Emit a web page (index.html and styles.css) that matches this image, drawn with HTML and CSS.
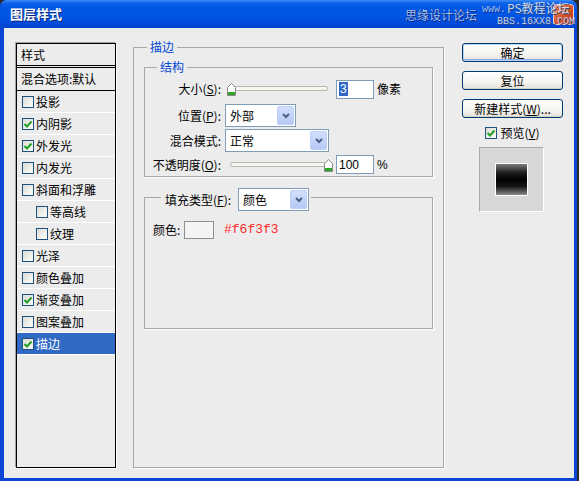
FILE: index.html
```html
<!DOCTYPE html>
<html lang="zh-CN">
<head>
<meta charset="utf-8">
<title>图层样式</title>
<link rel="stylesheet" href="styles.css">
</head>
<body>
<div class="window">
  <div class="titlebar">
    <span class="title">图层样式</span>
    <span class="wm wm1">思缘设计论坛</span>
    <span class="wm wm2">www.</span>
    <span class="closebtn"></span>
    <span class="wm wm3">PS教程论坛</span>
    <span class="wm wm4">BBS.16XX8.COM</span>
  </div>
  <div class="client">
    <div class="stylelist">
      <div class="lhead">样式</div>
      <div class="lblend">混合选项:默认</div>
      <ul class="items">
        <li class="item"><span class="cb"></span>投影</li>
        <li class="item"><span class="cb on"><svg viewBox="0 0 10 10"><path d="M1.5 5 L4 7.5 L8.5 2.5"/></svg></span>内阴影</li>
        <li class="item"><span class="cb on"><svg viewBox="0 0 10 10"><path d="M1.5 5 L4 7.5 L8.5 2.5"/></svg></span>外发光</li>
        <li class="item"><span class="cb"></span>内发光</li>
        <li class="item"><span class="cb"></span>斜面和浮雕</li>
        <li class="item sub"><span class="cb"></span>等高线</li>
        <li class="item sub"><span class="cb"></span>纹理</li>
        <li class="item"><span class="cb"></span>光泽</li>
        <li class="item"><span class="cb"></span>颜色叠加</li>
        <li class="item"><span class="cb on"><svg viewBox="0 0 10 10"><path d="M1.5 5 L4 7.5 L8.5 2.5"/></svg></span>渐变叠加</li>
        <li class="item"><span class="cb"></span>图案叠加</li>
        <li class="item sel"><span class="cb on"><svg viewBox="0 0 10 10"><path d="M1.5 5 L4 7.5 L8.5 2.5"/></svg></span>描边</li>
      </ul>
    </div>

    <fieldset class="group main">
      <legend>描边</legend>
      <div class="main-body">
        <fieldset class="group struct">
          <legend>结构</legend>
          <div class="struct-body">
            <div class="row r1">
              <span class="lbl">大小(<u>S</u>):</span>
              <span class="slider">
                <span class="track"></span>
                <svg class="thumb t-left" viewBox="0 0 9 13"><path d="M0.5 4.5 L4.5 0.5 L8.5 4.5 L8.5 12.5 L0.5 12.5 Z" fill="#fff" stroke="#8a8a80"/><rect x="1" y="9" width="7" height="3" fill="#2aa52a"/></svg>
              </span>
              <span class="num"><span class="selected">3</span></span>
              <span class="unit">像素</span>
            </div>
            <div class="row r2">
              <span class="lbl">位置(<u>P</u>):</span>
              <span class="select w71"><span class="val">外部</span><span class="arrow"><svg viewBox="0 0 8 6"><path d="M1 1 L4 4 L7 1"/></svg></span></span>
            </div>
            <div class="row r3">
              <span class="lbl">混合模式:</span>
              <span class="select w104"><span class="val">正常</span><span class="arrow"><svg viewBox="0 0 8 6"><path d="M1 1 L4 4 L7 1"/></svg></span></span>
            </div>
            <div class="row r4">
              <span class="lbl">不透明度(<u>O</u>):</span>
              <span class="slider">
                <span class="track t2"></span>
                <svg class="thumb t-right" viewBox="0 0 9 13"><path d="M0.5 4.5 L4.5 0.5 L8.5 4.5 L8.5 12.5 L0.5 12.5 Z" fill="#fff" stroke="#8a8a80"/><rect x="1" y="9" width="7" height="3" fill="#2aa52a"/></svg>
              </span>
              <span class="num"><span>100</span></span>
              <span class="unit pct">%</span>
            </div>
          </div>
        </fieldset>

        <fieldset class="group fill">
          <legend>
            <span class="flbl">填充类型(<u>F</u>):</span>
            <span class="select w71 fsel"><span class="val">颜色</span><span class="arrow"><svg viewBox="0 0 8 6"><path d="M1 1 L4 4 L7 1"/></svg></span></span>
          </legend>
          <div class="fill-body">
            <div class="colorrow">
              <span class="clbl">颜色:</span>
              <span class="swatch"></span>
              <span class="hex">#f6f3f3</span>
            </div>
          </div>
        </fieldset>
      </div>
    </fieldset>

    <div class="side">
      <div class="btn default">确定</div>
      <div class="btn">复位</div>
      <div class="btn">新建样式(<u>W</u>)...</div>
      <div class="preview-check"><span class="cb on"><svg viewBox="0 0 10 10"><path d="M1.5 5 L4 7.5 L8.5 2.5"/></svg></span>预览(<u>V</u>)</div>
      <div class="preview"><div class="swatchbox"></div></div>
    </div>
  </div>
</div>
</body>
</html>
```

FILE: styles.css
```css
* { box-sizing: border-box; }
html, body { margin: 0; padding: 0; }
body {
  width: 579px;
  height: 481px;
  overflow: hidden;
  background: #2a2a2a;
  font-family: "Noto Sans CJK SC", "Noto Sans", sans-serif;
  font-size: 12px;
  line-height: 16px;
  color: #000;
}
u { text-decoration: underline; text-underline-offset: 1px; }

.window {
  width: 577px;
  height: 481px;
  display: flex;
  flex-direction: column;
  background: #0a47d6;
  border-radius: 7px 7px 0 0;
  overflow: hidden;
}

/* title bar */
.titlebar {
  position: relative;
  height: 28px;
  flex: none;
  display: flex;
  align-items: center;
  padding-left: 10px;
  background: linear-gradient(#3d8df7 0, #0d62ea 3px, #0057e6 8px, #0054e2 17px, #004ad9 24px, #0042cc 28px);
}
.title {
  color: #fff;
  font-weight: bold;
  font-size: 13px;
  text-shadow: 1px 1px 0 #0b2676;
}
.wm {
  position: absolute;
  white-space: nowrap;
}
.wm1 {
  left: 405px; top: 7px;
  font-size: 12px;
  color: rgba(185, 212, 255, 0.9);
  text-shadow: 0 0 1px #08247a, 1px 1px 0 #0a2d8c;
}
.wm2 {
  left: 482px; top: 4px;
  font-size: 10px;
  line-height: 12px;
  font-family: "Liberation Mono", monospace;
  color: rgba(185, 212, 255, 0.85);
  text-shadow: 1px 1px 0 #0a2d8c;
}
.closebtn {
  position: absolute;
  left: 553px; top: 4px;
  width: 21px; height: 21px;
  border-radius: 3px;
  border: 1px solid #f0d0c4;
  background: linear-gradient(135deg, #e98a66, #d24a22 60%, #b8380f);
}
.wm3 {
  left: 507px; top: 0px;
  font-size: 12px;
  line-height: 16px;
  color: rgba(222, 230, 244, 0.9);
  text-shadow: 1px 1px 0 #3a4a7a;
}
.wm4 {
  left: 497px; top: 16px;
  font-size: 10px;
  line-height: 12px;
  font-family: "Liberation Mono", monospace;
  color: rgba(215, 222, 238, 0.9);
  text-shadow: 1px 1px 0 #3a4a7a;
}

/* client area */
.client {
  flex: 1;
  margin: 0 3px 3px 4px;
  background: #ececec;
  display: flex;
  align-items: flex-start;
  padding: 11px 0 0 12px;
}

/* style list */
.stylelist {
  flex: none;
  width: 100px;
  height: 425px;
  margin-top: 4px;
  border: 1px solid #000;
  box-shadow: -1px -1px 0 #a3a3a3, 1px 1px 0 #fff;
  background: #ececec;
}
.lhead {
  height: 22px;
  padding-left: 4px;
  display: flex;
  align-items: center;
  border-bottom: 1px solid #000;
}
.lblend {
  margin-top: 1px;
  height: 24px;
  padding-left: 4px;
  display: flex;
  align-items: center;
  border-top: 1px solid #000;
  border-bottom: 1px solid #000;
}
.items { list-style: none; margin: 0; padding: 0; }
.item {
  height: 22px;
  display: flex;
  align-items: center;
  border-bottom: 1px solid #fff;
  padding-left: 5px;
}
.item.sub { padding-left: 19px; }
.item.sel { background: #316ac5; color: #fff; }

.cb {
  flex: none;
  width: 12px;
  height: 12px;
  margin-right: 2px;
  border: 1px solid #1c5180;
  background: linear-gradient(135deg, #dcdcd5, #fdfdfb);
  display: flex;
  align-items: center;
  justify-content: center;
}
.cb svg { width: 10px; height: 10px; display: block; }
.cb svg path { fill: none; stroke: #21a121; stroke-width: 2; }

/* group boxes */
.group {
  margin: 0;
  padding: 0;
  min-width: 0;
  border: 1px solid #a8a89e;
  box-shadow: 1px 1px 0 #fff;
}
.group > legend {
  padding: 0 3px;
  line-height: 16px;
  font-size: 12px;
}
.main {
  flex: none;
  width: 311px;
  height: 429px;
  margin-left: 17px;
}
.main > legend { margin-left: 13px; color: #0046d5; }
.main-body { padding: 4px 10px 0 10px; }

.struct > legend { margin-left: 12px; color: #0046d5; }
.struct-body { padding: 3px 0 2px 0; }

.row { display: flex; align-items: center; }
.r1 { height: 22px; }
.r2 { height: 23px; margin-top: 4px; }
.r3 { height: 23px; margin-top: 2px; }
.r4 { height: 19px; margin-top: 3px; }
.lbl {
  width: 76px;
  margin-right: 4px;
  text-align: right;
  white-space: nowrap;
}

.slider {
  position: relative;
  flex: none;
  width: 107px;
  height: 22px;
  margin-right: 4px;
}
.track {
  position: absolute;
  left: 5px;
  right: 4px;
  top: 8px;
  height: 5px;
  border: 1px solid #b9b9ad;
  border-radius: 2px;
  background: #f6f6f2;
}
.track.t2 { right: 6px; }
.thumb {
  position: absolute;
  top: 5px;
  width: 9px;
  height: 13px;
}
.t-left { left: 2px; }
.t-right { left: 99px; }

.num {
  flex: none;
  width: 38px;
  height: 19px;
  border: 1px solid #7f9db9;
  background: #fff;
  padding-left: 2px;
  display: flex;
  align-items: center;
  font-family: "Liberation Sans", Arial, sans-serif;
  font-size: 12px;
}
.num .selected {
  background: #316ac5;
  color: #fff;
  padding: 0 1px;
  line-height: 14px;
}
.unit { margin-left: 3px; }
.pct { font-family: "Liberation Sans", Arial, sans-serif; margin-left: 3px; }

.select {
  flex: none;
  height: 23px;
  border: 1px solid #7f9db9;
  background: #fff;
  display: flex;
  align-items: center;
  padding: 1px 1px 1px 4px;
}
.select .val { flex: 1; }
.w71 { width: 71px; }
.w104 { width: 104px; }
.arrow {
  flex: none;
  width: 17px;
  height: 19px;
  border: 1px solid #bccff7;
  border-radius: 2px;
  background: linear-gradient(#d2defc, #b6c9f6);
  display: flex;
  align-items: center;
  justify-content: center;
}
.arrow svg { width: 8px; height: 6px; display: block; }
.arrow svg path { fill: none; stroke: #4d6185; stroke-width: 2; }

/* fill group */
.fill { margin-top: 11px; }
.fill > legend {
  margin-left: 16px;
  padding: 0 2px 0 4px;
  display: flex;
  align-items: flex-start;
  height: 19px;
}
.flbl {
  width: 73px;
  height: 19px;
  line-height: 23px;
  white-space: nowrap;
}
.fsel { margin-bottom: -4px; }
.fill-body { padding: 14px 0 89px 8px; }
.colorrow { display: flex; align-items: center; height: 18px; }
.clbl { width: 31px; }
.swatch {
  width: 30px;
  height: 18px;
  border: 1px solid #8f8f8f;
  background: #f6f3f3;
}
.hex {
  margin-left: 10px;
  font-family: "Liberation Mono", monospace;
  font-size: 13px;
  color: #ff2a2a;
}

/* right column */
.side {
  flex: none;
  width: 101px;
  margin-left: 18px;
  margin-top: 4px;
  display: flex;
  flex-direction: column;
}
.btn {
  height: 19px;
  margin-bottom: 9px;
  border: 1px solid #003c74;
  border-radius: 3px;
  background: linear-gradient(#ffffff, #f4f4f0 60%, #e3e1d8);
  display: flex;
  align-items: center;
  justify-content: center;
  white-space: nowrap;
  box-shadow: inset 0 -1px 0 #d6d0c5;
}
.btn.default {
  box-shadow: inset 0 0 0 1px #bcd2f5, inset 0 -2px 0 #8caaf0;
}
.preview-check {
  height: 13px;
  margin-top: -1px;
  display: flex;
  align-items: center;
  justify-content: center;
}
.preview-check .cb { margin-right: 3px; }
.preview {
  width: 65px;
  height: 65px;
  margin: 8px auto 0 17px;
  background: #d7d7d7;
  border-top: 1px solid #a9a9a9;
  border-left: 1px solid #a9a9a9;
  border-right: 1px solid #fff;
  border-bottom: 1px solid #fff;
  display: flex;
  align-items: center;
  justify-content: center;
}
.swatchbox {
  width: 33px;
  height: 33px;
  border: 1px solid #fff;
  background: linear-gradient(#7c7c7c, #1e1e1e 28%, #000 50%, #141414 72%, #8a8a8a);
}
```
